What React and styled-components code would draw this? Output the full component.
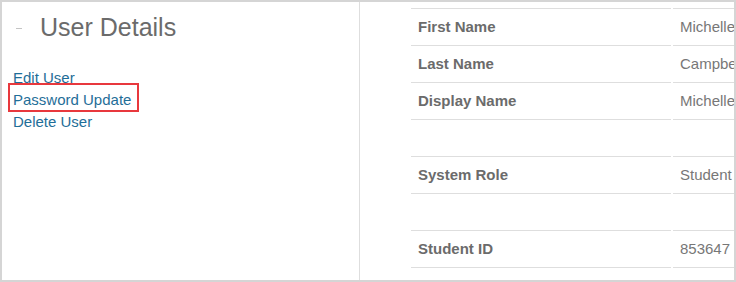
import React from 'react';
import styled, { createGlobalStyle } from 'styled-components';

const GlobalStyle = createGlobalStyle`
    html, body {
        margin: 0;
        padding: 0;
        background: #fff;
    }
    body {
        font-family: 'Liberation Sans', Arial, sans-serif;
    }
`;

const Frame = styled.div`
    box-sizing: border-box;
    width: 736px;
    height: 282px;
    border: 2px solid #d5d5d5;
    display: flex;
    overflow: hidden;
    background: #fff;
`;

const Sidebar = styled.div`
    width: 358px;
    flex-shrink: 0;
    border-right: 1px solid #dedede;
    padding: 0 0 0 11px;
    box-sizing: border-box;
`;

const Heading = styled.h1`
    display: flex;
    align-items: center;
    margin: 9px 0 0 0;
    font-size: 25px;
    line-height: 32px;
    font-weight: normal;
    color: #6b6b6b;
`;

const Dash = styled.span`
    display: block;
    width: 6px;
    height: 1px;
    background: #c4c4c4;
    margin: 2px 18px 0 3px;
`;

const Actions = styled.div`
    display: flex;
    flex-direction: column;
    align-items: flex-start;
    margin-top: 24px;
`;

const ActionLink = styled.a`
    position: relative;
    display: block;
    font-size: 15px;
    line-height: 22px;
    color: #1f6e98;
    text-decoration: none;

    ${props => props.$marked && `
        &::after {
            content: '';
            position: absolute;
            left: -5px;
            right: -8px;
            top: -6px;
            bottom: -1px;
            border: 2px solid #e8383d;
        }
    `}
`;

const Content = styled.div`
    flex: 1;
    padding: 6px 0 0 51px;
    min-width: 0;
`;

const Table = styled.div`
    display: grid;
    grid-template-columns: 260px 300px;
    column-gap: 2px;
`;

const Cell = styled.div`
    height: 35px;
    border-top: 1px solid #dedede;
    display: flex;
    align-items: center;
    padding: 0 7px 1px;
    white-space: nowrap;
    font-size: 15px;
    font-weight: ${props => (props.$label ? 'bold' : 'normal')};
    color: ${props => (props.$label ? '#6b6b6b' : '#777')};
`;

const rows = [
    ['First Name', 'Michelle'],
    ['Last Name', 'Campbell'],
    ['Display Name', 'Michelle Campbell'],
    ['', ''],
    ['System Role', 'Student'],
    ['', ''],
    ['Student ID', '853647'],
    ['Email', 'michelle.campbell@example.com']
];

export default function App() {
    return (
        <>
            <GlobalStyle />
            <Frame>
                <Sidebar>
                    <Heading>
                        <Dash />
                        User Details
                    </Heading>
                    <Actions>
                        <ActionLink href="#">Edit User</ActionLink>
                        <ActionLink href="#" $marked>Password Update</ActionLink>
                        <ActionLink href="#">Delete User</ActionLink>
                    </Actions>
                </Sidebar>
                <Content>
                    <Table>
                        {rows.map(([label, value], i) => (
                            <React.Fragment key={i}>
                                <Cell $label>{label}</Cell>
                                <Cell>{value}</Cell>
                            </React.Fragment>
                        ))}
                    </Table>
                </Content>
            </Frame>
        </>
    );
}
